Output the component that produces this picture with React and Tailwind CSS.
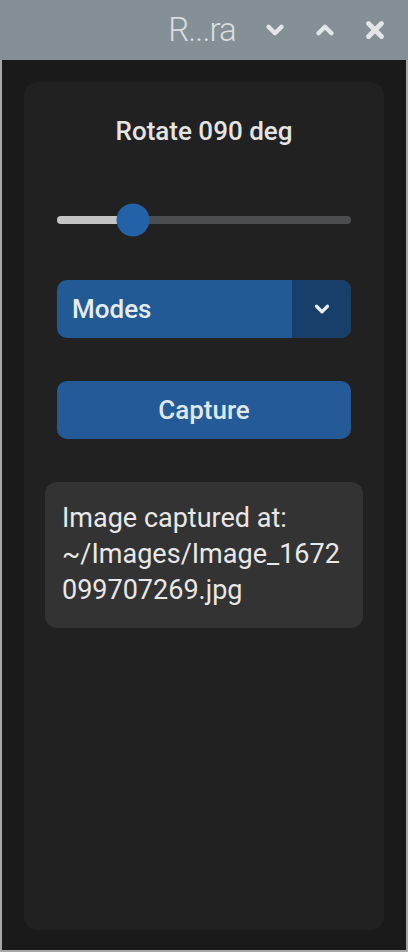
import { ChevronDown, ChevronUp, X } from "lucide-react";

export default function App() {
  const value = 90;
  const pct = (value / 360) * 100;

  return (
    <div
      className="flex h-[952px] w-[408px] flex-col bg-[#1a1a1a]"
      style={{ fontFamily: "Roboto, 'Noto Sans', sans-serif" }}
    >
      {/* title bar */}
      <div className="flex h-[60px] items-center justify-end bg-[#858f96] pr-[20px] text-[#e2e6e9]">
        <span className="mr-[26px] text-[33px] font-light tracking-tight text-[#d9dde0]">R...ra</span>
        <div className="flex items-center gap-[24px]">
          <ChevronDown size={26} strokeWidth={4} />
          <ChevronUp size={26} strokeWidth={4} />
          <X size={26} strokeWidth={4.5} />
        </div>
      </div>

      {/* window body */}
      <div className="flex flex-1 border-x-2 border-b-2 border-[#a8a8a8] px-[22px] pb-[20px] pt-[22px]">
        <div className="flex min-w-0 flex-1 flex-col rounded-[14px] bg-[#212121] px-[33px] pt-[34px]">
          <div className="text-center text-[26px] leading-[30px] font-medium text-[#e4e4e4]">
            Rotate 090 deg
          </div>

          {/* slider */}
          <div className="relative mt-[70px] h-[8px] rounded-full bg-[#4b4e51]">
            <div
              className="h-full rounded-full bg-[#c4c4c4]"
              style={{ width: `${pct}%` }}
            />
            <div
              className="absolute top-1/2 h-[33px] w-[33px] -translate-x-1/2 -translate-y-1/2 rounded-full bg-[#2361a8]"
              style={{ left: `calc(${pct}% + 2px)` }}
            />
          </div>

          {/* dropdown */}
          <div className="mt-[56px] flex h-[58px] overflow-hidden rounded-[10px] bg-[#225a95]">
            <div className="flex flex-1 items-center pl-[15px] text-[26px] font-medium text-[#e6ecf2]">
              Modes
            </div>
            <div className="flex w-[59px] items-center justify-center bg-[#183f69] text-[#e6ecf2]">
              <ChevronDown size={22} strokeWidth={3.5} />
            </div>
          </div>

          <button className="mt-[43px] h-[58px] rounded-[10px] bg-[#235a97] text-[26px] font-medium text-[#dfe8f1]">
            Capture
          </button>

          {/* info box */}
          <div className="-mx-[12px] mt-[43px] rounded-[12px] bg-[#333333] px-[17px] pb-[20px] pt-[18px] text-[27px] leading-[36px] text-[#e8e8e8]">
            Image captured at:
            <br />
            ~/Images/Image_1672
            <br />
            099707269.jpg
          </div>
        </div>
      </div>
    </div>
  );
}
